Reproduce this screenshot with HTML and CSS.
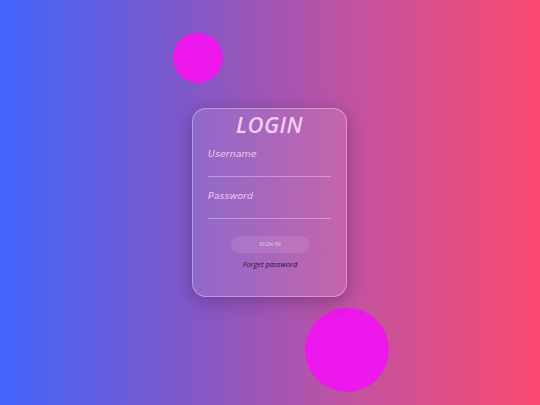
FILE: index.html
```html
<!DOCTYPE html>
<html>
<head>
<meta charset="utf-8">
<link rel="stylesheet" href="styles.css">
</head>
<body>
<div class="stage">
  <div class="blob blob-top"></div>
  <div class="blob blob-bottom"></div>
  <form class="card">
    <h1 class="title">LOGIN</h1>
    <label class="field">
      <span class="label">Username</span>
      <span class="line"></span>
    </label>
    <label class="field">
      <span class="label">Password</span>
      <span class="line"></span>
    </label>
    <div class="actions">
      <span class="btn">SIGN IN</span>
      <span class="forgot">Forget password</span>
    </div>
  </form>
</div>
</body>
</html>
```
FILE: styles.css
```css
* { box-sizing: border-box; }
html, body { margin: 0; padding: 0; }
body {
  width: 540px;
  height: 405px;
  overflow: hidden;
  font-family: "Open Sans", "Liberation Sans", sans-serif;
}
.stage {
  position: relative;
  width: 540px;
  height: 405px;
  background: linear-gradient(to right, #4165fc 0%, #8158c8 35%, #c153a0 65%, #fb4a70 100%);
  display: flex;
  align-items: center;
  justify-content: center;
}
.blob {
  position: absolute;
  border-radius: 50%;
  background: #ec18ec;
}
.blob-top { left: 173px; top: 33px; width: 50px; height: 50px; }
.blob-bottom { left: 305px; top: 308px; width: 84px; height: 84px; }
.card {
  position: relative;
  margin: 0;
  margin-left: -1px;
  width: 155px;
  height: 189px;
  border-radius: 14px;
  background: rgba(255, 255, 255, 0.1);
  border: 1px solid rgba(255, 255, 255, 0.35);
  box-shadow: 0 4px 18px rgba(40, 0, 60, 0.3);
  padding: 0 15px 0 15px;
  display: flex;
  flex-direction: column;
}
.title {
  margin: 0;
  margin-top: 1px;
  text-align: center;
  font-size: 22px;
  line-height: 28px;
  font-style: italic;
  font-weight: 600;
  letter-spacing: 0.5px;
  color: #f2cdf2;
}
.field {
  display: flex;
  flex-direction: column;
  padding-top: 10px;
}
.field + .field { padding-top: 13px; }
.label {
  font-family: "DejaVu Sans", "Open Sans", sans-serif;
  font-size: 9.5px;
  line-height: 12px;
  font-style: italic;
  color: #f0c8ef;
  height: 28px;
}
.line {
  display: block;
  height: 1px;
  background: rgba(255, 255, 255, 0.35);
}
.actions {
  display: flex;
  flex-direction: column;
  align-items: center;
  padding-top: 17px;
  margin-left: 1px;
}
.btn {
  width: 78px;
  height: 17px;
  border-radius: 9px;
  background: rgba(255, 255, 255, 0.1);
  color: rgba(255, 255, 255, 0.6);
  font-size: 6px;
  line-height: 17px;
  text-align: center;
}
.forgot {
  margin-top: 5px;
  font-size: 7.5px;
  line-height: 12px;
  font-style: italic;
  color: #2a0f36;
}
```
